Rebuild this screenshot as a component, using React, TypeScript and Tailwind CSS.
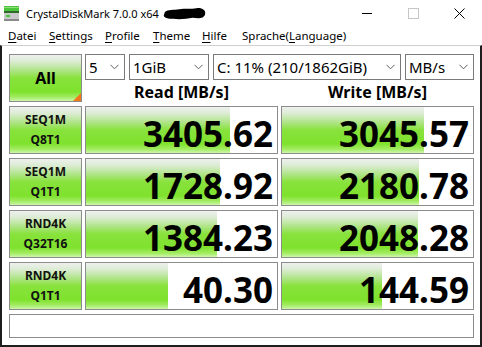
import React from "react";

const GRAD =
  "bg-[linear-gradient(to_bottom,#eef0ee_0%,#dcecd4_14%,#aee484_34%,#88e23c_50%,#7fe22d_80%,#a4ec64_92%,#cff6ae_100%)]";

const rows = [
  { l1: "SEQ1M", l2: "Q8T1", read: "3405.62", rw: 144, write: "3045.57", ww: 142 },
  { l1: "SEQ1M", l2: "Q1T1", read: "1728.92", rw: 134, write: "2180.78", ww: 137 },
  { l1: "RND4K", l2: "Q32T16", read: "1384.23", rw: 131, write: "2048.28", ww: 136 },
  { l1: "RND4K", l2: "Q1T1", read: "40.30", rw: 82, write: "144.59", ww: 100 },
];

function Chevron() {
  return (
    <svg width="9" height="6" viewBox="0 0 9 6" className="shrink-0">
      <path d="M0.5 0.8 L4.5 4.8 L8.5 0.8" fill="none" stroke="#606060" strokeWidth="1" />
    </svg>
  );
}

function Combo({ text, w }: { text: string; w: string }) {
  return (
    <div className={`${w} h-[26px] border border-[#7a7a7a] bg-white flex items-center pl-[3px] pr-[5px]`}>
      <span className="flex-1 text-[15px] leading-[20px] text-black whitespace-nowrap">{text}</span>
      <Chevron />
    </div>
  );
}

function Value({ v, w }: { v: string; w: number }) {
  return (
    <div className="relative h-[48px] border border-[#8c8c8c] bg-white">
      <div className={`absolute left-0 top-0 bottom-0 ${GRAD}`} style={{ width: w }} />
      <div className="relative h-full flex items-center justify-end pr-[4px] pt-[7px]">
        <span className="text-[35px] font-bold leading-[38px] text-black whitespace-nowrap">{v}</span>
      </div>
    </div>
  );
}

function Menu({ u, rest, pre = "", w }: { u: string; rest: string; pre?: string; w: string }) {
  return (
    <span className={`${w} shrink-0 whitespace-nowrap`}>
      {pre}
      <span className="underline underline-offset-2">{u}</span>
      {rest}
    </span>
  );
}

export default function App() {
  return (
    <div
      className="w-[482px] h-[347px] bg-white flex flex-col overflow-hidden text-black"
      style={{ fontFamily: '"Noto Sans", "Open Sans", sans-serif' }}
    >
      {/* Title bar */}
      <div className="h-[27px] flex items-center shrink-0">
        <div className="pl-[4px] pr-[7px] flex items-center">
          <svg width="15" height="15" viewBox="0 0 15 15">
            <rect x="0" y="0" width="15" height="5" fill="#4cc43c" />
            <rect x="0" y="1" width="15" height="1" fill="#8fe07a" />
            <rect x="0" y="5" width="15" height="2" fill="#2f6a2a" />
            <rect x="0" y="7" width="15" height="8" fill="#c9c9c9" />
            <rect x="0" y="13" width="15" height="2" fill="#8a8a8a" />
            <rect x="2" y="9" width="4" height="2" fill="#42c83a" />
          </svg>
        </div>
        <span className="text-[11px] leading-[16px] whitespace-nowrap pt-[1px]">CrystalDiskMark 7.0.0 x64</span>
        <svg width="46" height="14" viewBox="0 0 48 14" className="ml-[3px]">
          <path
            d="M3 5 C6 2 12 3 18 2 C24 1 30 2 36 1 C41 0 46 3 45 7 C44 12 38 12 32 11 C26 12 18 13 12 12 C7 12 1 11 2 8 Z"
            fill="#000"
          />
        </svg>
        <div className="flex-1" />
        <div className="w-[46px] h-[27px] flex items-center justify-center">
          <div className="w-[10px] h-[1px] bg-black" />
        </div>
        <div className="w-[46px] h-[27px] flex items-center justify-center">
          <div className="w-[11px] h-[11px] border border-[#c6c6c6]" />
        </div>
        <div className="w-[46px] h-[27px] flex items-center justify-center">
          <svg width="11" height="11" viewBox="0 0 11 11">
            <path d="M0.5 0.5 L10.5 10.5 M10.5 0.5 L0.5 10.5" stroke="#000" strokeWidth="1" />
          </svg>
        </div>
      </div>

      {/* Menu bar */}
      <div className="h-[18px] flex items-center text-[11.5px] leading-[16px] shrink-0 pl-[8px]">
        <Menu u="D" rest="atei" w="w-[41px]" />
        <Menu u="S" rest="ettings" w="w-[56px]" />
        <Menu u="P" rest="rofile" w="w-[48px]" />
        <Menu u="T" rest="heme" w="w-[49px]" />
        <Menu u="H" rest="ilfe" w="w-[40px]" />
        <Menu pre="Sprache(" u="L" rest="anguage)" w="w-[110px]" />
      </div>

      {/* Client area */}
      <div className="flex-1 border-t border-t-[#cfcfcf] border-x-2 border-b-2 border-x-[#1e1e1e] border-b-[#1e1e1e] pl-[7px] pt-[8px]">
        <div className="grid grid-cols-[73px_193px_193px] gap-x-[3px] gap-y-[4px]">
          {/* All button */}
          <div className={`relative h-[48px] border border-[#8c8c8c] ${GRAD} flex items-center justify-center`}>
            <span className="text-[16px] font-bold leading-[20px]">All</span>
            <div className="absolute right-0 bottom-0 w-0 h-0 border-l-[8px] border-l-transparent border-b-[8px] border-b-[#f07818]" />
          </div>
          <div className="col-span-2 flex flex-col">
            <div className="flex gap-[4px]">
              <Combo text="5" w="w-[40px]" />
              <Combo text="1GiB" w="w-[80px]" />
              <Combo text="C: 11% (210/1862GiB)" w="w-[188px]" />
              <Combo text="MB/s" w="w-[69px]" />
            </div>
            <div className="flex-1 grid grid-cols-2 gap-x-[3px] items-center">
              <div className="text-center text-[16px] font-bold leading-[20px] pt-[2px]">Read [MB/s]</div>
              <div className="text-center text-[16px] font-bold leading-[20px] pt-[2px]">Write [MB/s]</div>
            </div>
          </div>

          {rows.map((r, i) => (
            <React.Fragment key={i}>
              <div className={`h-[48px] border border-[#8c8c8c] ${GRAD} flex flex-col items-center justify-center text-[12px] font-bold leading-[20px] text-[#111]`}>
                <span>{r.l1}</span>
                <span>{r.l2}</span>
              </div>
              <Value v={r.read} w={r.rw} />
              <Value v={r.write} w={r.ww} />
            </React.Fragment>
          ))}

          <div className="col-span-3 h-[24px] border border-[#8c8c8c] bg-white" />
        </div>
      </div>
    </div>
  );
}
